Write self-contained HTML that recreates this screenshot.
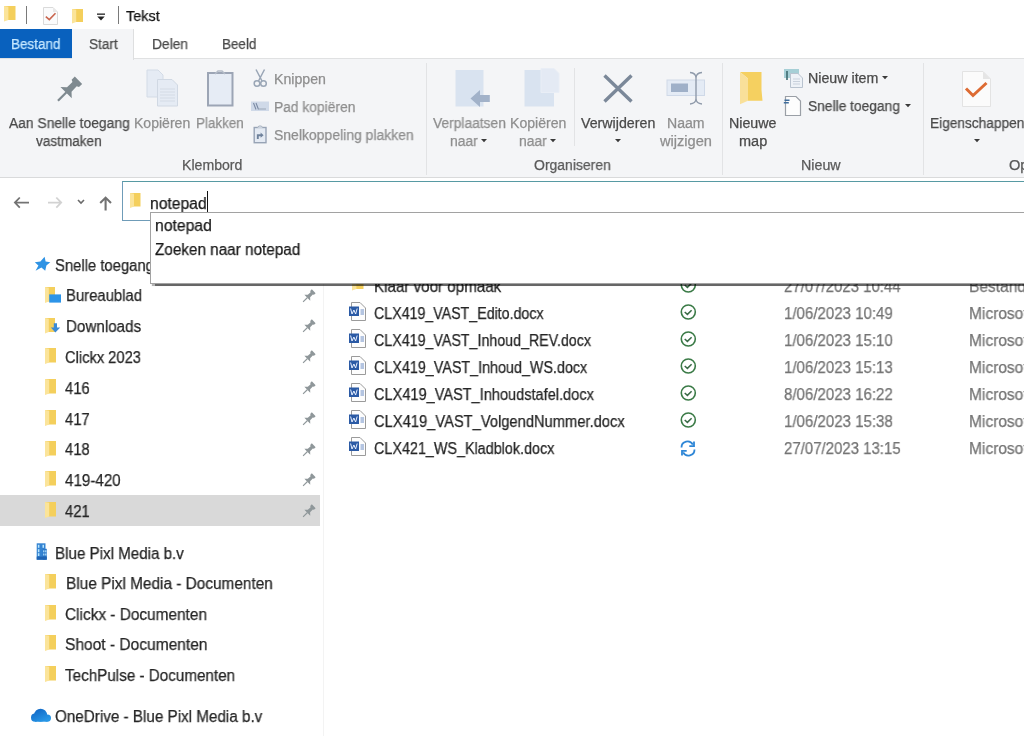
<!DOCTYPE html>
<html><head><meta charset="utf-8">
<style>
html,body{margin:0;padding:0;width:1024px;height:736px;overflow:hidden;background:#fff;position:relative;font-family:"Liberation Sans",sans-serif;}
.a{position:absolute;}
.t{position:absolute;white-space:nowrap;line-height:20px;z-index:2;will-change:transform;-webkit-text-stroke:0.25px currentColor;}
svg{position:absolute;overflow:visible;z-index:2;}
</style></head><body>
<!-- title bar -->
<div class="a" style="left:0;top:0;width:1024px;height:29px;background:#fff"></div>
<!-- tab row -->
<div class="a" style="left:0;top:29px;width:72px;height:29px;background:#0961be"></div>
<div class="a" style="left:72px;top:29px;width:61px;height:31px;background:#f4f5f7;border-right:1px solid #dedfe0;z-index:1"></div>
<!-- ribbon -->
<div class="a" style="left:0;top:58px;width:1024px;height:118px;background:#f4f5f7;border-top:1px solid #e0e1e2;border-bottom:1px solid #d9dadb"></div>
<!-- ribbon separators -->
<div class="a" style="left:426px;top:63px;width:1px;height:112px;background:#e2e3e5"></div>
<div class="a" style="left:574px;top:68px;width:1px;height:78px;background:#e2e3e5"></div>
<div class="a" style="left:722px;top:63px;width:1px;height:112px;background:#e2e3e5"></div>
<div class="a" style="left:923px;top:63px;width:1px;height:112px;background:#e2e3e5"></div>
<!-- address box -->
<div class="a" style="left:122px;top:181px;width:910px;height:40px;border:1px solid #6f9cb8;border-top-color:#579aa3;box-sizing:border-box;background:#fff"></div>
<div class="a" style="left:207px;top:191px;width:1px;height:22px;background:#111;z-index:3"></div>
<!-- nav pane -->
<div class="a" style="left:0;top:495px;width:320px;height:31px;background:#d9d9d9"></div>
<div class="a" style="left:323px;top:228px;width:1px;height:508px;background:#f3f3f3"></div>
<svg style="left:4px;top:6px;z-index:2" width="11.5" height="15.5" viewBox="0 0 11.5 15.5"><rect x="0" y="0" width="11.5" height="14.0" fill="#f4cf5c"/><path d="M0 0 L4.4 0.8 L4.4 14.0 L0 15.5 Z" fill="#fbe49a"/></svg>
<div class="a" style="left:26px;top:6px;width:1px;height:18px;background:#7a7a7a;z-index:2"></div>
<svg style="left:43px;top:7px;z-index:2" width="15" height="18" viewBox="0 0 15 18"><path d="M0.5 0.5 H10 L14.5 5 V17.5 H0.5 Z" fill="#fafbfc" stroke="#dadada"/><path d="M10 0.5 V5 H14.5" fill="#e8e8e8"/><path d="M2.8 9.6 L6.3 12.6 L12.5 6.2" fill="none" stroke="#c9664f" stroke-width="1.6"/></svg>
<svg style="left:72px;top:8.5px;z-index:2" width="11" height="14.5" viewBox="0 0 11 14.5"><rect x="0" y="0" width="11.0" height="13.0" fill="#f4cf5c"/><path d="M0 0 L4.2 0.8 L4.2 13.0 L0 14.5 Z" fill="#fbe49a"/></svg>
<svg style="left:96px;top:13px;z-index:2" width="10" height="9" viewBox="0 0 10 9"><rect x="1" y="0.5" width="8" height="1.3" fill="#222"/><path d="M1.3 3.5 H8.7 L5 7.6 Z" fill="#222"/></svg>
<div class="a" style="left:118px;top:6px;width:1px;height:18px;background:#7a7a7a;z-index:2"></div>
<svg style="left:50px;top:66px;z-index:2" width="40" height="40" viewBox="0 0 40 40"><g transform="translate(16.1 26.6) rotate(45)"><path d="M-8 0 L8 0 L3.2 -4.5 L3 -12 L5.2 -13 L5.2 -17.5 L-5.2 -17.5 L-5.2 -13 L-3 -12 L-3.2 -4.5 Z" fill="#7f8a90"/><rect x="-1.1" y="-0.5" width="2.2" height="12" fill="#7f8a90"/></g></svg>
<svg style="left:146px;top:69px;z-index:2" width="34" height="39" viewBox="0 0 34 39"><path d="M1 1 H12 L17 6 V28 H1 Z" fill="#e5ebf4" stroke="#d3dbe6"/><path d="M11.5 10.5 H26 L31.5 16 V37 H11.5 Z" fill="#e5ebf4" stroke="#d0d8e3"/><path d="M14 20 H29 M14 23 H29 M14 26 H29 M14 29 H29 M14 32 H29" stroke="#d4dbe5" stroke-width="1"/></svg>
<svg style="left:206px;top:69px;z-index:2" width="29" height="39" viewBox="0 0 29 39"><rect x="2" y="4" width="24.5" height="32.5" fill="#e6ecf5" stroke="#9ca5b5" stroke-width="2"/><path d="M9 5 L12 2 H16 L19 5" fill="none" stroke="#b4bcc8" stroke-width="1.5"/></svg>
<svg style="left:253px;top:69px;z-index:2" width="15" height="20" viewBox="0 0 15 20"><path d="M3 0.5 L9 12 M11.5 0.5 L5.5 12" stroke="#9aa6b6" stroke-width="1.5" fill="none"/><circle cx="4" cy="14.5" r="2.8" fill="none" stroke="#9aa6b6" stroke-width="1.5"/><circle cx="10.5" cy="14.5" r="2.8" fill="none" stroke="#9aa6b6" stroke-width="1.5"/></svg>
<svg style="left:251px;top:101px;z-index:2" width="19" height="11" viewBox="0 0 19 11"><rect x="0" y="0.5" width="18" height="9.5" fill="#cfd9e8"/><path d="M2.5 2 L5 8.5 M5 2 L7.5 8.5" stroke="#7b8aa3" stroke-width="1.1"/><path d="M8 8 H15" stroke="#9aa6b6" stroke-width="1"/></svg>
<svg style="left:253px;top:125px;z-index:2" width="15" height="19" viewBox="0 0 15 19"><rect x="1.2" y="2.5" width="11.8" height="15.2" fill="#e4eaf3" stroke="#97a3b5" stroke-width="1.4"/><path d="M4.5 2.8 L5.8 1 H8.4 L9.7 2.8" fill="#dfe5ee" stroke="#a8b2c0" stroke-width="1"/><path d="M4.8 14 V10.2 H8.6" stroke="#6f829c" stroke-width="1.9" fill="none"/><path d="M7.6 7.6 L10.6 10.2 L7.6 12.8 Z" fill="#6f829c"/></svg>
<svg style="left:454px;top:69px;z-index:2" width="38" height="40" viewBox="0 0 38 40"><rect x="1.5" y="1" width="28" height="36.5" fill="#d9e3f0"/><path d="M16.5 29.5 L26 21 V26 H35.8 V33 H26 V38 Z" fill="#a2b2c9"/></svg>
<svg style="left:523px;top:67px;z-index:2" width="38" height="42" viewBox="0 0 38 42"><rect x="1.5" y="3" width="29.5" height="36.5" fill="#d9e3f0"/><path d="M18 1.5 H31 L36 6.5 V25.5 H18 Z" fill="#e4eaf4" stroke="#e9eef6"/></svg>
<svg style="left:602px;top:73px;z-index:2" width="33" height="32" viewBox="0 0 33 32"><path d="M2.5 2.5 L29.5 28.5 M29.5 2.5 L2.5 28.5" stroke="#7b8899" stroke-width="3.4"/></svg>
<svg style="left:665px;top:71px;z-index:2" width="42" height="36" viewBox="0 0 42 36"><rect x="2" y="9" width="37.5" height="15.5" fill="#e4ebf5" stroke="#cfd9e8"/><rect x="6" y="12.5" width="17" height="8.5" fill="#9fb0c8"/><path d="M25 1.5 Q31 2 31 7 V27.5 Q31 32.5 25 33 M37 1.5 Q31 2 31 7 M37 33 Q31 32.5 31 27.5" stroke="#909bab" stroke-width="1.4" fill="none"/></svg>
<svg style="left:739px;top:71px;z-index:2" width="26" height="36" viewBox="0 0 26 36"><path d="M1 1 H22.5 V19 L23.5 29.7 H9 V7.6 Z" fill="#f5d060"/><path d="M1 1 L9 7.6 V29.7 L1 33.3 Z" fill="#f9e09a"/></svg>
<svg style="left:783px;top:68px;z-index:2" width="22" height="21" viewBox="0 0 22 21"><rect x="1" y="1" width="15" height="9" fill="#a6cfd6"/><path d="M4 3 V12" stroke="#3d6a6e" stroke-width="1.6"/><path d="M7.5 5.5 H15 L19.5 10 V19.5 H7.5 Z" fill="#eef2f7" stroke="#b9c3cf"/><path d="M10 11 H17 M10 13.5 H17 M10 16 H17" stroke="#c9d1dc"/></svg>
<svg style="left:783px;top:95px;z-index:2" width="20" height="22" viewBox="0 0 20 22"><path d="M2.5 1.5 H13 L17.5 6 V20.5 H2.5 Z" fill="#fdfdfd" stroke="#9a9fa6" stroke-width="1.2"/><path d="M1.5 5.3 H6.5 M0.8 7.8 H5.8" stroke="#3f6d9c" stroke-width="1.5"/></svg>
<svg style="left:961px;top:70px;z-index:2" width="32" height="38" viewBox="0 0 32 38"><path d="M1.5 1.5 H22 L29.5 9 V36.5 H1.5 Z" fill="#fbfbfb" stroke="#e3e3e3"/><path d="M22 1.5 V9 H29.5" fill="#e5e5e5"/><path d="M5 18.5 L12 25.5 L25.5 13" fill="none" stroke="#dd6b33" stroke-width="3"/></svg>
<svg style="left:480.5px;top:139.0px;z-index:2" width="6" height="4" viewBox="0 0 6 4"><path d="M0 0 H6 L3 3.2 Z" fill="#3a3a3a"/></svg>
<svg style="left:549.5px;top:139.0px;z-index:2" width="6" height="4" viewBox="0 0 6 4"><path d="M0 0 H6 L3 3.2 Z" fill="#3a3a3a"/></svg>
<svg style="left:614.5px;top:139.0px;z-index:2" width="6" height="4" viewBox="0 0 6 4"><path d="M0 0 H6 L3 3.2 Z" fill="#3a3a3a"/></svg>
<svg style="left:881.5px;top:76.0px;z-index:2" width="6" height="4" viewBox="0 0 6 4"><path d="M0 0 H6 L3 3.2 Z" fill="#3a3a3a"/></svg>
<svg style="left:904.5px;top:104.0px;z-index:2" width="6" height="4" viewBox="0 0 6 4"><path d="M0 0 H6 L3 3.2 Z" fill="#3a3a3a"/></svg>
<svg style="left:973.5px;top:139.0px;z-index:2" width="6" height="4" viewBox="0 0 6 4"><path d="M0 0 H6 L3 3.2 Z" fill="#3a3a3a"/></svg>
<svg style="left:13px;top:196px;z-index:2" width="18" height="13" viewBox="0 0 18 13"><path d="M6.8 1.5 L1.9 6.6 L6.8 11.7 M1.9 6.6 H16" stroke="#737373" stroke-width="1.8" fill="none"/></svg>
<svg style="left:47px;top:196px;z-index:2" width="17" height="13" viewBox="0 0 17 13"><path d="M9.3 1.5 L14.2 6.6 L9.3 11.7 M14.2 6.6 H1" stroke="#d2d2d2" stroke-width="1.8" fill="none"/></svg>
<svg style="left:77px;top:199px;z-index:2" width="8" height="6" viewBox="0 0 8 6"><path d="M1 1 L4 4 L7 1" stroke="#6a6a6a" stroke-width="1.6" fill="none"/></svg>
<svg style="left:98px;top:196px;z-index:2" width="15" height="16" viewBox="0 0 15 16"><path d="M2.2 6.9 L7.6 1.6 L13 6.9 M7.6 1.6 V14.5" stroke="#727272" stroke-width="2.1" fill="none"/></svg>
<svg style="left:130px;top:193px;z-index:2" width="10.5" height="15" viewBox="0 0 10.5 15"><rect x="0" y="0" width="10.5" height="13.5" fill="#f4cf5c"/><path d="M0 0 L4.0 0.8 L4.0 13.5 L0 15.0 Z" fill="#fbe49a"/></svg>
<svg style="left:34px;top:256px;z-index:2" width="17" height="16" viewBox="0 0 17 16"><path d="M10.6 0.8 L11.6 5.6 L16.3 6.3 L12.4 9.6 L11.2 14.8 L7.4 11.6 L1.6 14.8 L4.4 9.6 L0.8 6.3 L6.4 5.6 Z" fill="#2f93e4"/></svg>
<svg style="left:45px;top:287px;z-index:2" width="10" height="16" viewBox="0 0 10 16"><rect x="0" y="0" width="10.0" height="14.5" fill="#f4cf5c"/><path d="M0 0 L3.8 0.8 L3.8 14.5 L0 16.0 Z" fill="#fbe49a"/></svg>
<svg style="left:49px;top:293.5px;z-index:2" width="13" height="9" viewBox="0 0 13 9"><rect x="0.2" y="0.4" width="11.8" height="8.2" fill="#2c94e8"/></svg>
<svg style="left:45px;top:317.5px;z-index:2" width="10" height="15.5" viewBox="0 0 10 15.5"><rect x="0" y="0" width="10.0" height="14.0" fill="#f4cf5c"/><path d="M0 0 L3.8 0.8 L3.8 14.0 L0 15.5 Z" fill="#fbe49a"/></svg>
<svg style="left:50px;top:322px;z-index:2" width="12" height="12" viewBox="0 0 12 12"><path d="M3.8 1.2 H7 V5.5 H10.2 L5.4 10.6 L0.8 5.5 H3.8 Z" fill="#3b8ad6"/></svg>
<svg style="left:45px;top:348.3px;z-index:2" width="11" height="16" viewBox="0 0 11 16"><rect x="0" y="0" width="11.0" height="14.5" fill="#f4cf5c"/><path d="M0 0 L4.2 0.8 L4.2 14.5 L0 16.0 Z" fill="#fbe49a"/></svg>
<svg style="left:45px;top:379px;z-index:2" width="11" height="16" viewBox="0 0 11 16"><rect x="0" y="0" width="11.0" height="14.5" fill="#f4cf5c"/><path d="M0 0 L4.2 0.8 L4.2 14.5 L0 16.0 Z" fill="#fbe49a"/></svg>
<svg style="left:45px;top:409.8px;z-index:2" width="11" height="16" viewBox="0 0 11 16"><rect x="0" y="0" width="11.0" height="14.5" fill="#f4cf5c"/><path d="M0 0 L4.2 0.8 L4.2 14.5 L0 16.0 Z" fill="#fbe49a"/></svg>
<svg style="left:45px;top:440.6px;z-index:2" width="11" height="16" viewBox="0 0 11 16"><rect x="0" y="0" width="11.0" height="14.5" fill="#f4cf5c"/><path d="M0 0 L4.2 0.8 L4.2 14.5 L0 16.0 Z" fill="#fbe49a"/></svg>
<svg style="left:45px;top:471.4px;z-index:2" width="11" height="16" viewBox="0 0 11 16"><rect x="0" y="0" width="11.0" height="14.5" fill="#f4cf5c"/><path d="M0 0 L4.2 0.8 L4.2 14.5 L0 16.0 Z" fill="#fbe49a"/></svg>
<svg style="left:45px;top:502.2px;z-index:2" width="11" height="16" viewBox="0 0 11 16"><rect x="0" y="0" width="11.0" height="14.5" fill="#f4cf5c"/><path d="M0 0 L4.2 0.8 L4.2 14.5 L0 16.0 Z" fill="#fbe49a"/></svg>
<svg style="left:45px;top:573.8px;z-index:2" width="11" height="16" viewBox="0 0 11 16"><rect x="0" y="0" width="11.0" height="14.5" fill="#f4cf5c"/><path d="M0 0 L4.2 0.8 L4.2 14.5 L0 16.0 Z" fill="#fbe49a"/></svg>
<svg style="left:45px;top:604.6px;z-index:2" width="11" height="16" viewBox="0 0 11 16"><rect x="0" y="0" width="11.0" height="14.5" fill="#f4cf5c"/><path d="M0 0 L4.2 0.8 L4.2 14.5 L0 16.0 Z" fill="#fbe49a"/></svg>
<svg style="left:45px;top:635.4px;z-index:2" width="11" height="16" viewBox="0 0 11 16"><rect x="0" y="0" width="11.0" height="14.5" fill="#f4cf5c"/><path d="M0 0 L4.2 0.8 L4.2 14.5 L0 16.0 Z" fill="#fbe49a"/></svg>
<svg style="left:45px;top:666.2px;z-index:2" width="11" height="16" viewBox="0 0 11 16"><rect x="0" y="0" width="11.0" height="14.5" fill="#f4cf5c"/><path d="M0 0 L4.2 0.8 L4.2 14.5 L0 16.0 Z" fill="#fbe49a"/></svg>
<svg style="left:298px;top:282.6px;z-index:2" width="24" height="24" viewBox="0 0 24 24"><g transform="translate(9.3 14.7) scale(0.52) rotate(45)"><path d="M-8 0 L8 0 L3.2 -4.5 L3 -12 L5.2 -13 L5.2 -17.5 L-5.2 -17.5 L-5.2 -13 L-3 -12 L-3.2 -4.5 Z" fill="#8f979a"/><rect x="-1.1" y="-0.5" width="2.2" height="12" fill="#8f979a"/></g></svg>
<svg style="left:298px;top:313.4px;z-index:2" width="24" height="24" viewBox="0 0 24 24"><g transform="translate(9.3 14.7) scale(0.52) rotate(45)"><path d="M-8 0 L8 0 L3.2 -4.5 L3 -12 L5.2 -13 L5.2 -17.5 L-5.2 -17.5 L-5.2 -13 L-3 -12 L-3.2 -4.5 Z" fill="#8f979a"/><rect x="-1.1" y="-0.5" width="2.2" height="12" fill="#8f979a"/></g></svg>
<svg style="left:298px;top:344.2px;z-index:2" width="24" height="24" viewBox="0 0 24 24"><g transform="translate(9.3 14.7) scale(0.52) rotate(45)"><path d="M-8 0 L8 0 L3.2 -4.5 L3 -12 L5.2 -13 L5.2 -17.5 L-5.2 -17.5 L-5.2 -13 L-3 -12 L-3.2 -4.5 Z" fill="#8f979a"/><rect x="-1.1" y="-0.5" width="2.2" height="12" fill="#8f979a"/></g></svg>
<svg style="left:298px;top:375px;z-index:2" width="24" height="24" viewBox="0 0 24 24"><g transform="translate(9.3 14.7) scale(0.52) rotate(45)"><path d="M-8 0 L8 0 L3.2 -4.5 L3 -12 L5.2 -13 L5.2 -17.5 L-5.2 -17.5 L-5.2 -13 L-3 -12 L-3.2 -4.5 Z" fill="#8f979a"/><rect x="-1.1" y="-0.5" width="2.2" height="12" fill="#8f979a"/></g></svg>
<svg style="left:298px;top:405.8px;z-index:2" width="24" height="24" viewBox="0 0 24 24"><g transform="translate(9.3 14.7) scale(0.52) rotate(45)"><path d="M-8 0 L8 0 L3.2 -4.5 L3 -12 L5.2 -13 L5.2 -17.5 L-5.2 -17.5 L-5.2 -13 L-3 -12 L-3.2 -4.5 Z" fill="#8f979a"/><rect x="-1.1" y="-0.5" width="2.2" height="12" fill="#8f979a"/></g></svg>
<svg style="left:298px;top:436.6px;z-index:2" width="24" height="24" viewBox="0 0 24 24"><g transform="translate(9.3 14.7) scale(0.52) rotate(45)"><path d="M-8 0 L8 0 L3.2 -4.5 L3 -12 L5.2 -13 L5.2 -17.5 L-5.2 -17.5 L-5.2 -13 L-3 -12 L-3.2 -4.5 Z" fill="#8f979a"/><rect x="-1.1" y="-0.5" width="2.2" height="12" fill="#8f979a"/></g></svg>
<svg style="left:298px;top:467.4px;z-index:2" width="24" height="24" viewBox="0 0 24 24"><g transform="translate(9.3 14.7) scale(0.52) rotate(45)"><path d="M-8 0 L8 0 L3.2 -4.5 L3 -12 L5.2 -13 L5.2 -17.5 L-5.2 -17.5 L-5.2 -13 L-3 -12 L-3.2 -4.5 Z" fill="#8f979a"/><rect x="-1.1" y="-0.5" width="2.2" height="12" fill="#8f979a"/></g></svg>
<svg style="left:298px;top:498.2px;z-index:2" width="24" height="24" viewBox="0 0 24 24"><g transform="translate(9.3 14.7) scale(0.52) rotate(45)"><path d="M-8 0 L8 0 L3.2 -4.5 L3 -12 L5.2 -13 L5.2 -17.5 L-5.2 -17.5 L-5.2 -13 L-3 -12 L-3.2 -4.5 Z" fill="#8f979a"/><rect x="-1.1" y="-0.5" width="2.2" height="12" fill="#8f979a"/></g></svg>
<svg style="left:36px;top:543px;z-index:2" width="12" height="17" viewBox="0 0 12 17"><rect x="0.7" y="0.3" width="8.8" height="16.4" fill="#3584d2"/><rect x="6.7" y="5.8" width="4.1" height="10.9" fill="#2c78c8"/><rect x="0.7" y="13.6" width="10.1" height="3.1" fill="#1f64b4"/><g fill="#b9e6ff"><rect x="1.9" y="1.8" width="1.5" height="3"/><rect x="1.9" y="6.2" width="1.5" height="3"/><rect x="1.9" y="10.2" width="1.5" height="2.8"/><rect x="6.5" y="1.8" width="1.5" height="3"/><rect x="7.2" y="7.3" width="1.2" height="2"/><rect x="9.2" y="7.3" width="1.2" height="2"/><rect x="7.2" y="10.5" width="1.2" height="2"/><rect x="9.2" y="10.5" width="1.2" height="2"/></g></svg>
<svg style="left:30px;top:707px;z-index:2" width="23" height="16" viewBox="0 0 23 16"><defs><linearGradient id="cg" gradientUnits="userSpaceOnUse" x1="6" y1="2" x2="12" y2="15"><stop offset="0" stop-color="#1168c6"/><stop offset="1" stop-color="#2796e6"/></linearGradient></defs><g fill="url(#cg)"><circle cx="10.6" cy="8.2" r="6.5"/><circle cx="5.1" cy="10.7" r="4.1"/><circle cx="17.4" cy="11.1" r="3.6"/><rect x="5" y="9" width="12.5" height="5.7"/></g></svg>
<svg style="left:352px;top:276px;z-index:2" width="11.5" height="14.5" viewBox="0 0 11.5 14.5"><rect x="0" y="0" width="11.5" height="13.0" fill="#f4cf5c"/><path d="M0 0 L4.4 0.8 L4.4 13.0 L0 14.5 Z" fill="#fbe49a"/></svg>
<svg style="left:348px;top:302px;z-index:2" width="19" height="20" viewBox="0 0 19 20"><path d="M3.5 0.5 H12 L17.5 6 V18.5 H3.5 Z" fill="#fdfdfd" stroke="#9b9b9b"/><rect x="1" y="4.5" width="10" height="9.5" fill="#2b5aa5"/><path d="M2.6 6.5 L4 12 L5.9 8 L7.6 12 L9.2 6.5" stroke="#e8f0ff" stroke-width="1" fill="none"/><path d="M12.5 8 H16 M12.5 10 H16 M12.5 12 H16" stroke="#6c8dc5" stroke-width="1"/></svg>
<svg style="left:348px;top:329px;z-index:2" width="19" height="20" viewBox="0 0 19 20"><path d="M3.5 0.5 H12 L17.5 6 V18.5 H3.5 Z" fill="#fdfdfd" stroke="#9b9b9b"/><rect x="1" y="4.5" width="10" height="9.5" fill="#2b5aa5"/><path d="M2.6 6.5 L4 12 L5.9 8 L7.6 12 L9.2 6.5" stroke="#e8f0ff" stroke-width="1" fill="none"/><path d="M12.5 8 H16 M12.5 10 H16 M12.5 12 H16" stroke="#6c8dc5" stroke-width="1"/></svg>
<svg style="left:348px;top:356px;z-index:2" width="19" height="20" viewBox="0 0 19 20"><path d="M3.5 0.5 H12 L17.5 6 V18.5 H3.5 Z" fill="#fdfdfd" stroke="#9b9b9b"/><rect x="1" y="4.5" width="10" height="9.5" fill="#2b5aa5"/><path d="M2.6 6.5 L4 12 L5.9 8 L7.6 12 L9.2 6.5" stroke="#e8f0ff" stroke-width="1" fill="none"/><path d="M12.5 8 H16 M12.5 10 H16 M12.5 12 H16" stroke="#6c8dc5" stroke-width="1"/></svg>
<svg style="left:348px;top:383px;z-index:2" width="19" height="20" viewBox="0 0 19 20"><path d="M3.5 0.5 H12 L17.5 6 V18.5 H3.5 Z" fill="#fdfdfd" stroke="#9b9b9b"/><rect x="1" y="4.5" width="10" height="9.5" fill="#2b5aa5"/><path d="M2.6 6.5 L4 12 L5.9 8 L7.6 12 L9.2 6.5" stroke="#e8f0ff" stroke-width="1" fill="none"/><path d="M12.5 8 H16 M12.5 10 H16 M12.5 12 H16" stroke="#6c8dc5" stroke-width="1"/></svg>
<svg style="left:348px;top:410px;z-index:2" width="19" height="20" viewBox="0 0 19 20"><path d="M3.5 0.5 H12 L17.5 6 V18.5 H3.5 Z" fill="#fdfdfd" stroke="#9b9b9b"/><rect x="1" y="4.5" width="10" height="9.5" fill="#2b5aa5"/><path d="M2.6 6.5 L4 12 L5.9 8 L7.6 12 L9.2 6.5" stroke="#e8f0ff" stroke-width="1" fill="none"/><path d="M12.5 8 H16 M12.5 10 H16 M12.5 12 H16" stroke="#6c8dc5" stroke-width="1"/></svg>
<svg style="left:348px;top:437px;z-index:2" width="19" height="20" viewBox="0 0 19 20"><path d="M3.5 0.5 H12 L17.5 6 V18.5 H3.5 Z" fill="#fdfdfd" stroke="#9b9b9b"/><rect x="1" y="4.5" width="10" height="9.5" fill="#2b5aa5"/><path d="M2.6 6.5 L4 12 L5.9 8 L7.6 12 L9.2 6.5" stroke="#e8f0ff" stroke-width="1" fill="none"/><path d="M12.5 8 H16 M12.5 10 H16 M12.5 12 H16" stroke="#6c8dc5" stroke-width="1"/></svg>
<svg style="left:680px;top:277.3px;z-index:2" width="17" height="17" viewBox="0 0 17 17"><circle cx="8.3" cy="8" r="7" fill="#fff" stroke="#3b7b47" stroke-width="1.6"/><path d="M4.7 8 L7.4 10.4 L11.6 6.2" stroke="#3b6b47" stroke-width="1.5" fill="none"/></svg>
<svg style="left:680px;top:304.3px;z-index:2" width="17" height="17" viewBox="0 0 17 17"><circle cx="8.3" cy="8" r="7" fill="#fff" stroke="#3b7b47" stroke-width="1.6"/><path d="M4.7 8 L7.4 10.4 L11.6 6.2" stroke="#3b6b47" stroke-width="1.5" fill="none"/></svg>
<svg style="left:680px;top:331.3px;z-index:2" width="17" height="17" viewBox="0 0 17 17"><circle cx="8.3" cy="8" r="7" fill="#fff" stroke="#3b7b47" stroke-width="1.6"/><path d="M4.7 8 L7.4 10.4 L11.6 6.2" stroke="#3b6b47" stroke-width="1.5" fill="none"/></svg>
<svg style="left:680px;top:358.3px;z-index:2" width="17" height="17" viewBox="0 0 17 17"><circle cx="8.3" cy="8" r="7" fill="#fff" stroke="#3b7b47" stroke-width="1.6"/><path d="M4.7 8 L7.4 10.4 L11.6 6.2" stroke="#3b6b47" stroke-width="1.5" fill="none"/></svg>
<svg style="left:680px;top:385.3px;z-index:2" width="17" height="17" viewBox="0 0 17 17"><circle cx="8.3" cy="8" r="7" fill="#fff" stroke="#3b7b47" stroke-width="1.6"/><path d="M4.7 8 L7.4 10.4 L11.6 6.2" stroke="#3b6b47" stroke-width="1.5" fill="none"/></svg>
<svg style="left:680px;top:412.3px;z-index:2" width="17" height="17" viewBox="0 0 17 17"><circle cx="8.3" cy="8" r="7" fill="#fff" stroke="#3b7b47" stroke-width="1.6"/><path d="M4.7 8 L7.4 10.4 L11.6 6.2" stroke="#3b6b47" stroke-width="1.5" fill="none"/></svg>
<svg style="left:679px;top:440px;z-index:2" width="18" height="17" viewBox="0 0 18 17"><path d="M2.5 7.5 A6 6 0 0 1 13.8 4.6" stroke="#2e86d6" stroke-width="1.8" fill="none"/><path d="M15 1.5 V6.2 H10.3" stroke="#2e86d6" stroke-width="1.8" fill="none"/><path d="M15.5 9.5 A6 6 0 0 1 4.2 12.4" stroke="#2e86d6" stroke-width="1.8" fill="none"/><path d="M3 15.5 V10.8 H7.7" stroke="#2e86d6" stroke-width="1.8" fill="none"/></svg>
<div class="t" style="left:125.6px;top:5.8px;font-size:15px;color:#151515;transform:scaleX(0.9653);transform-origin:0 0;">Tekst</div>
<div class="t" style="left:11.1px;top:33.8px;font-size:14px;color:#c6e8ff;transform:scaleX(0.9635);transform-origin:0 0;">Bestand</div>
<div class="t" style="left:88.5px;top:34.2px;font-size:14px;color:#4a4a4a;transform:scaleX(0.9703);transform-origin:0 0;">Start</div>
<div class="t" style="left:151.8px;top:34.2px;font-size:14px;color:#4a4a4a;transform:scaleX(0.9838);transform-origin:0 0;">Delen</div>
<div class="t" style="left:222.2px;top:34.2px;font-size:14px;color:#4a4a4a;transform:scaleX(0.9606);transform-origin:0 0;">Beeld</div>
<div class="t" style="left:9.2px;top:113.1px;font-size:14px;color:#4a4a4a;transform:scaleX(0.9876);transform-origin:0 0;">Aan Snelle toegang</div>
<div class="t" style="left:36.4px;top:130.9px;font-size:14px;color:#4a4a4a;transform:scaleX(0.9704);transform-origin:0 0;">vastmaken</div>
<div class="t" style="left:134.4px;top:113.1px;font-size:14px;color:#8e8e8e;transform:scaleX(1.0027);transform-origin:0 0;">Kopiëren</div>
<div class="t" style="left:195.9px;top:113.1px;font-size:14px;color:#8e8e8e;transform:scaleX(0.9576);transform-origin:0 0;">Plakken</div>
<div class="t" style="left:182.4px;top:154.9px;font-size:14px;color:#5a5a5a;transform:scaleX(1.0080);transform-origin:0 0;">Klembord</div>
<div class="t" style="left:273.9px;top:69.1px;font-size:14px;color:#8e8e8e;transform:scaleX(1.0099);transform-origin:0 0;">Knippen</div>
<div class="t" style="left:273.9px;top:96.7px;font-size:14px;color:#8e8e8e;transform:scaleX(0.9865);transform-origin:0 0;">Pad kopiëren</div>
<div class="t" style="left:273.9px;top:124.9px;font-size:14px;color:#8e8e8e;transform:scaleX(0.9971);transform-origin:0 0;">Snelkoppeling plakken</div>
<div class="t" style="left:432.7px;top:113.1px;font-size:14px;color:#8e8e8e;transform:scaleX(0.9858);transform-origin:0 0;">Verplaatsen</div>
<div class="t" style="left:450.3px;top:130.9px;font-size:14px;color:#8e8e8e;transform:scaleX(0.9918);transform-origin:0 0;">naar</div>
<div class="t" style="left:510.2px;top:113.1px;font-size:14px;color:#8e8e8e;transform:scaleX(1.0063);transform-origin:0 0;">Kopiëren</div>
<div class="t" style="left:519.4px;top:130.9px;font-size:14px;color:#8e8e8e;transform:scaleX(0.9918);transform-origin:0 0;">naar</div>
<div class="t" style="left:534.2px;top:154.8px;font-size:14px;color:#5a5a5a;transform:scaleX(0.9968);transform-origin:0 0;">Organiseren</div>
<div class="t" style="left:580.7px;top:113.1px;font-size:14px;color:#4a4a4a;transform:scaleX(1.0156);transform-origin:0 0;">Verwijderen</div>
<div class="t" style="left:667.4px;top:113.1px;font-size:14px;color:#8e8e8e;transform:scaleX(1.0064);transform-origin:0 0;">Naam</div>
<div class="t" style="left:659.6px;top:130.9px;font-size:14px;color:#8e8e8e;transform:scaleX(1.0439);transform-origin:0 0;">wijzigen</div>
<div class="t" style="left:728.8px;top:113.1px;font-size:14px;color:#4a4a4a;transform:scaleX(1.0171);transform-origin:0 0;">Nieuwe</div>
<div class="t" style="left:738.9px;top:130.9px;font-size:14px;color:#4a4a4a;transform:scaleX(1.0355);transform-origin:0 0;">map</div>
<div class="t" style="left:807.7px;top:68.4px;font-size:14px;color:#4a4a4a;transform:scaleX(1.0166);transform-origin:0 0;">Nieuw item</div>
<div class="t" style="left:807.7px;top:96.3px;font-size:14px;color:#4a4a4a;transform:scaleX(0.9837);transform-origin:0 0;">Snelle toegang</div>
<div class="t" style="left:801.0px;top:154.8px;font-size:14px;color:#5a5a5a;transform:scaleX(1.0178);transform-origin:0 0;">Nieuw</div>
<div class="t" style="left:929.6px;top:112.9px;font-size:14px;color:#4a4a4a;transform:scaleX(0.9769);transform-origin:0 0;">Eigenschappen</div>
<div class="t" style="left:1009.1px;top:154.8px;font-size:14px;color:#5a5a5a;transform:scaleX(1.0435);transform-origin:0 0;">Op</div>
<div class="t" style="left:150.3px;top:193.7px;font-size:16px;color:#1a1a1a;transform:scaleX(0.9785);transform-origin:0 0;">notepad</div>
<div class="t" style="left:154.6px;top:216.2px;font-size:16px;color:#1a1a1a;transform:scaleX(0.9820);transform-origin:0 0;z-index:6;">notepad</div>
<div class="t" style="left:154.6px;top:239.5px;font-size:16px;color:#1a1a1a;transform:scaleX(0.9551);transform-origin:0 0;z-index:6;">Zoeken naar notepad</div>
<div class="t" style="left:55.2px;top:255.7px;font-size:16px;color:#262626;transform:scaleX(0.9263);transform-origin:0 0;">Snelle toegang</div>
<div class="t" style="left:65.9px;top:286.4px;font-size:16px;color:#262626;transform:scaleX(0.9286);transform-origin:0 0;">Bureaublad</div>
<div class="t" style="left:65.5px;top:317.1px;font-size:16px;color:#262626;transform:scaleX(0.9488);transform-origin:0 0;">Downloads</div>
<div class="t" style="left:64.9px;top:348.0px;font-size:16px;color:#262626;transform:scaleX(0.9177);transform-origin:0 0;">Clickx 2023</div>
<div class="t" style="left:64.9px;top:378.8px;font-size:16px;color:#262626;transform:scaleX(0.9250);transform-origin:0 0;">416</div>
<div class="t" style="left:64.9px;top:409.5px;font-size:16px;color:#262626;transform:scaleX(0.9250);transform-origin:0 0;">417</div>
<div class="t" style="left:64.9px;top:440.3px;font-size:16px;color:#262626;transform:scaleX(0.9250);transform-origin:0 0;">418</div>
<div class="t" style="left:64.9px;top:471.1px;font-size:16px;color:#262626;transform:scaleX(0.9486);transform-origin:0 0;">419-420</div>
<div class="t" style="left:64.9px;top:501.9px;font-size:16px;color:#262626;transform:scaleX(0.9250);transform-origin:0 0;">421</div>
<div class="t" style="left:55.3px;top:543.5px;font-size:16px;color:#262626;transform:scaleX(0.9466);transform-origin:0 0;">Blue Pixl Media b.v</div>
<div class="t" style="left:65.5px;top:573.7px;font-size:16px;color:#262626;transform:scaleX(0.9609);transform-origin:0 0;">Blue Pixl Media - Documenten</div>
<div class="t" style="left:65.1px;top:604.5px;font-size:16px;color:#262626;transform:scaleX(0.9620);transform-origin:0 0;">Clickx - Documenten</div>
<div class="t" style="left:65.1px;top:635.2px;font-size:16px;color:#262626;transform:scaleX(0.9710);transform-origin:0 0;">Shoot - Documenten</div>
<div class="t" style="left:65.1px;top:666.0px;font-size:16px;color:#262626;transform:scaleX(0.9515);transform-origin:0 0;">TechPulse - Documenten</div>
<div class="t" style="left:55.0px;top:707.1px;font-size:16px;color:#262626;transform:scaleX(0.9515);transform-origin:0 0;">OneDrive - Blue Pixl Media b.v</div>
<div class="t" style="left:373.8px;top:304.1px;font-size:16px;color:#262626;transform:scaleX(0.8877);transform-origin:0 0;">CLX419_VAST_Edito.docx</div>
<div class="t" style="left:373.8px;top:331.1px;font-size:16px;color:#262626;transform:scaleX(0.8903);transform-origin:0 0;">CLX419_VAST_Inhoud_REV.docx</div>
<div class="t" style="left:373.8px;top:358.1px;font-size:16px;color:#262626;transform:scaleX(0.8955);transform-origin:0 0;">CLX419_VAST_Inhoud_WS.docx</div>
<div class="t" style="left:373.8px;top:385.1px;font-size:16px;color:#262626;transform:scaleX(0.9096);transform-origin:0 0;">CLX419_VAST_Inhoudstafel.docx</div>
<div class="t" style="left:373.8px;top:412.1px;font-size:16px;color:#262626;transform:scaleX(0.9192);transform-origin:0 0;">CLX419_VAST_VolgendNummer.docx</div>
<div class="t" style="left:373.8px;top:439.1px;font-size:16px;color:#262626;transform:scaleX(0.8974);transform-origin:0 0;">CLX421_WS_Kladblok.docx</div>
<div class="t" style="left:374.1px;top:277.1px;font-size:16px;color:#262626;transform:scaleX(0.9472);transform-origin:0 0;">Klaar voor opmaak</div>
<div class="t" style="left:784.4px;top:277.1px;font-size:16px;color:#747474;transform:scaleX(0.9361);transform-origin:0 0;">27/07/2023 10:44</div>
<div class="t" style="left:784.4px;top:304.1px;font-size:16px;color:#747474;transform:scaleX(0.9406);transform-origin:0 0;">1/06/2023 10:49</div>
<div class="t" style="left:784.4px;top:331.1px;font-size:16px;color:#747474;transform:scaleX(0.9406);transform-origin:0 0;">1/06/2023 15:10</div>
<div class="t" style="left:784.4px;top:358.1px;font-size:16px;color:#747474;transform:scaleX(0.9406);transform-origin:0 0;">1/06/2023 15:13</div>
<div class="t" style="left:784.4px;top:385.1px;font-size:16px;color:#747474;transform:scaleX(0.9406);transform-origin:0 0;">8/06/2023 16:22</div>
<div class="t" style="left:784.4px;top:412.1px;font-size:16px;color:#747474;transform:scaleX(0.9406);transform-origin:0 0;">1/06/2023 15:38</div>
<div class="t" style="left:784.4px;top:439.1px;font-size:16px;color:#747474;transform:scaleX(0.9361);transform-origin:0 0;">27/07/2023 13:15</div>
<div class="t" style="left:968.7px;top:277.1px;font-size:16px;color:#747474;transform:scaleX(0.9700);transform-origin:0 0;">Bestandsmap</div>
<div class="t" style="left:968.7px;top:304.1px;font-size:16px;color:#747474;transform:scaleX(0.9700);transform-origin:0 0;">Microsoft Word-document</div>
<div class="t" style="left:968.7px;top:331.1px;font-size:16px;color:#747474;transform:scaleX(0.9700);transform-origin:0 0;">Microsoft Word-document</div>
<div class="t" style="left:968.7px;top:358.1px;font-size:16px;color:#747474;transform:scaleX(0.9700);transform-origin:0 0;">Microsoft Word-document</div>
<div class="t" style="left:968.7px;top:385.1px;font-size:16px;color:#747474;transform:scaleX(0.9700);transform-origin:0 0;">Microsoft Word-document</div>
<div class="t" style="left:968.7px;top:412.1px;font-size:16px;color:#747474;transform:scaleX(0.9700);transform-origin:0 0;">Microsoft Word-document</div>
<div class="t" style="left:968.7px;top:439.1px;font-size:16px;color:#747474;transform:scaleX(0.9700);transform-origin:0 0;">Microsoft Word-document</div>
<!-- popup -->
<div class="a" style="left:150px;top:212px;width:880px;height:72px;background:#fff;border:1px solid #a2a2a2;box-sizing:border-box;z-index:5;box-shadow:2px 1.5px 1px rgba(0,0,0,0.6)"></div>
</body></html>
